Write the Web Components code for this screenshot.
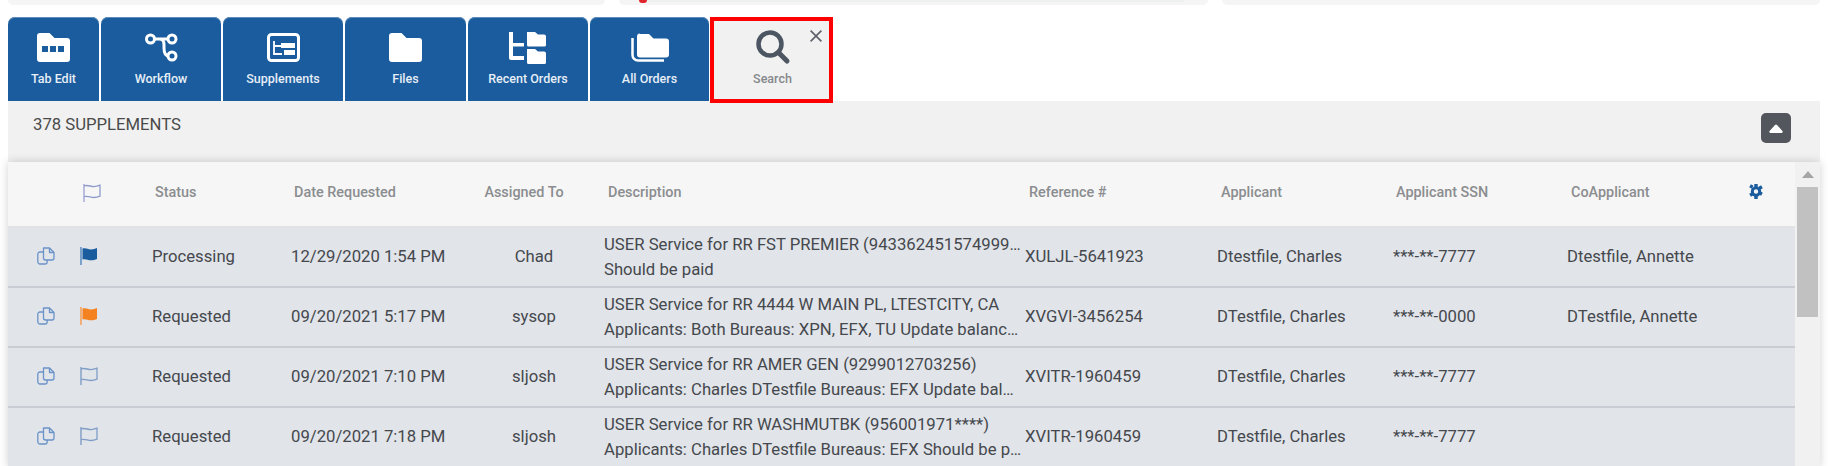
<!DOCTYPE html>
<html>
<head>
<meta charset="utf-8">
<title>Supplements</title>
<style>
  html, body { margin: 0; padding: 0; background: #fff; overflow: hidden; }
  body { font-family: "Roboto", "Liberation Sans", sans-serif; }
</style>
</head>
<body>
<order-page>
  <top-strip></top-strip>
  <tab-bar>
    <tab-item label="Tab Edit" w="91"><ui-icon name="folderdots"></ui-icon></tab-item>
    <tab-item label="Workflow" w="120"><ui-icon name="workflow"></ui-icon></tab-item>
    <tab-item label="Supplements" w="120"><ui-icon name="supplements"></ui-icon></tab-item>
    <tab-item label="Files" w="121"><ui-icon name="folder"></ui-icon></tab-item>
    <tab-item label="Recent Orders" w="120"><ui-icon name="recent"></ui-icon></tab-item>
    <tab-item label="All Orders" w="119"><ui-icon name="allorders"></ui-icon></tab-item>
    <search-tab></search-tab>
  </tab-bar>
  <supp-panel count="378 SUPPLEMENTS">
    <supp-table>
      <supp-row flag="flagblue">
        <span slot="status">Processing</span><span slot="date">12/29/2020 1:54 PM</span><span slot="who">Chad</span>
        <span slot="l1">USER Service for RR FST PREMIER (943362451574999…</span><span slot="l2">Should be paid</span>
        <span slot="ref">XULJL-5641923</span><span slot="app">Dtestfile, Charles</span><span slot="ssn">***-**-7777</span><span slot="co">Dtestfile, Annette</span>
      </supp-row>
      <supp-row flag="flagorange">
        <span slot="status">Requested</span><span slot="date">09/20/2021 5:17 PM</span><span slot="who">sysop</span>
        <span slot="l1">USER Service for RR 4444 W MAIN PL, LTESTCITY, CA</span><span slot="l2">Applicants: Both Bureaus: XPN, EFX, TU Update balanc…</span>
        <span slot="ref">XVGVI-3456254</span><span slot="app">DTestfile, Charles</span><span slot="ssn">***-**-0000</span><span slot="co">DTestfile, Annette</span>
      </supp-row>
      <supp-row flag="flagline">
        <span slot="status">Requested</span><span slot="date">09/20/2021 7:10 PM</span><span slot="who">sljosh</span>
        <span slot="l1">USER Service for RR AMER GEN (9299012703256)</span><span slot="l2">Applicants: Charles DTestfile Bureaus: EFX Update bal…</span>
        <span slot="ref">XVITR-1960459</span><span slot="app">DTestfile, Charles</span><span slot="ssn">***-**-7777</span>
      </supp-row>
      <supp-row flag="flagline">
        <span slot="status">Requested</span><span slot="date">09/20/2021 7:18 PM</span><span slot="who">sljosh</span>
        <span slot="l1">USER Service for RR WASHMUTBK (956001971****)</span><span slot="l2">Applicants: Charles DTestfile Bureaus: EFX Should be p…</span>
        <span slot="ref">XVITR-1960459</span><span slot="app">DTestfile, Charles</span><span slot="ssn">***-**-7777</span>
      </supp-row>
    </supp-table>
  </supp-panel>
</order-page>

<script>
// all the icons in one place, every one drawn at its real pixel size
const ICONS = {
  folderdots: [33, 29, `<path fill="#fff" d="M3 0h9.500l5 5H30a3 3 0 0 1 3 3v18a3 3 0 0 1-3 3H3a3 3 0 0 1-3-3V3a3 3 0 0 1 3-3z"/>
    <path fill="#1a5c9e" d="M5 13h6v6H5zM13 13h6v6h-6zM21 13h6v6h-6z"/>`],
  workflow: [33, 29, `<g fill="none" stroke="#fff" stroke-width="3"><path d="M9 6h14M14 6c4 0 5 2 5 6v3c0 5 2 8 5 8"/>
    <circle cx="5.500" cy="6" r="4"/><circle cx="27" cy="6" r="4"/><circle cx="27" cy="23" r="4"/></g>`],
  supplements: [33, 29, `<rect x="1.500" y="1.500" width="30" height="26" rx="3" fill="none" stroke="#fff" stroke-width="3"/>
    <path fill="none" stroke="#fff" stroke-width="1.800" d="M7 8v13h8M7 13h7"/><path fill="#fff" d="M14 10h14v5H14zM17 17h11v5H17z"/>`],
  folder: [33, 29, `<path fill="#fff" d="M3 0h9.500l5 5H30a3 3 0 0 1 3 3v18a3 3 0 0 1-3 3H3a3 3 0 0 1-3-3V3a3 3 0 0 1 3-3z"/>`],
  recent: [38, 33, `<path fill="#fff" d="M0 1h4v11h11v3.500H4V25h11v4H2a2 2 0 0 1-2-2z"/>
    <path fill="#fff" d="M18 1h8l3 2.500h6a2 2 0 0 1 2 2V14a1.500 1.500 0 0 1-1.500 1.500h-16A1.500 1.500 0 0 1 18 14zM18 18h8l3 2.500h6a2 2 0 0 1 2 2V31.500a1.500 1.500 0 0 1-1.500 1.500h-16a1.500 1.500 0 0 1-1.500-1.500z"/>`],
  allorders: [38, 29, `<path fill="#fff" d="M9 1h9l4.500 4.500H35a3 3 0 0 1 3 3v13a3 3 0 0 1-3 3H9a3 3 0 0 1-3-3v-18a3 3 0 0 1 3-3z"/>
    <path fill="none" stroke="#fff" stroke-width="2.500" d="M1.500 5v17a5.500 5.500 0 0 0 5.500 5.500h26"/>`],
  search: [34, 34, `<circle cx="14" cy="14" r="11.500" fill="none" stroke="#4c5662" stroke-width="4.500"/>
    <path d="M22.500 22.500L31 31" stroke="#4c5662" stroke-width="5" stroke-linecap="round"/>`],
  close: [12, 12, `<path d="M.6.6l10.800 10.800M11.400.6L.6 11.400" stroke="#5b6068" stroke-width="1.600" fill="none"/>`],
  copy: [18, 18, `<g fill="none" stroke="#6b93c8" stroke-width="1.300" stroke-linejoin="round"><path d="M6.500 1h6l4.500 4.500V11a2 2 0 0 1-2 2H8.500a2 2 0 0 1-2-2z"/><path d="M12.500 1v4.500H17"/><path d="M6.500 5H3a2.200 2.200 0 0 0-2.200 2.200v7.600A2.200 2.200 0 0 0 3 17h5a2.200 2.200 0 0 0 2.200-2.200V13"/></g>`],
  flagblue: [18, 18, `<path d="M1 0v18" stroke="#5f90c4" stroke-width="1.600"/><path fill="#1a5c9e" d="M2.500 1.500C6 .4 7.500 2.400 11 2.400c2.500 0 4-.6 6-1.400v11c-2 .8-3.500 1.300-6 1.300-3.500 0-5-1.800-8.500-.9z"/>`],
  flagorange: [18, 18, `<path d="M1 0v18" stroke="#f5a25c" stroke-width="1.600"/><path fill="#f58220" d="M2.500 1.500C6 .4 7.500 2.400 11 2.400c2.500 0 4-.6 6-1.400v11c-2 .8-3.500 1.300-6 1.300-3.500 0-5-1.800-8.500-.9z"/>`],
  flagline: [18, 18, `<path d="M1 0v18" stroke="#7f9dc6" stroke-width="1.400"/><path fill="none" stroke="#7f9dc6" stroke-width="1.300" d="M1 1.800C5 .6 7.500 2.600 11 2.600c2.500 0 4-.6 6-1.400v11c-2 .8-3.500 1.300-6 1.300-3.500 0-6-1.800-10-.9"/>`],
  flaghead: [18, 18, `<path d="M1 0v18" stroke="#a3a6d6" stroke-width="1.400"/><path fill="none" stroke="#8f9ccb" stroke-width="1.300" d="M1 1.800C5 .6 7.500 2.600 11 2.600c2.500 0 4-.6 6-1.400v11c-2 .8-3.500 1.300-6 1.300-3.500 0-6-1.800-10-.9"/>`],
  gear: [14, 15, `<circle cx="7" cy="7.500" r="3.700" fill="none" stroke="#1a5c9e" stroke-width="3"/>
    <path fill="#1a5c9e" d="M5.300 0h3.400v3H5.300zM5.300 12h3.400v3H5.300zM.2 3.200l1.700-2.900 2.600 1.500-1.700 2.900zM9.500 10.200l1.700-2.900 2.600 1.500-1.700 2.900zM1.900 12.700L.2 9.800l2.600-1.500 1.700 2.900zM11.200 5.700L9.500 2.800l2.600-1.500 1.700 2.900z"/>`],
  caretup: [14, 9, `<path fill="#fff" d="M6 1a1.300 1.300 0 0 1 2 0l5.400 6a1.200 1.200 0 0 1-1 2H1.600a1.200 1.200 0 0 1-1-2z"/>`],
  scrollup: [12, 7, `<path fill="#a6a6a6" d="M6 0l6 7H0z"/>`]
}

class UiIcon extends HTMLElement {
  connectedCallback() {
    const [w, h, body] = ICONS[this.getAttribute('name')]
    this.attachShadow({ mode: 'open' })
    this.shadowRoot.innerHTML = `
      <style>:host { display: block; line-height: 0; } svg { display: block; overflow: visible; }</style>
      <svg width="${w}" height="${h}" viewBox="0 0 ${w} ${h}">${body}</svg>`
  }
}
customElements.define('ui-icon', UiIcon)

class OrderPage extends HTMLElement {
  constructor() {
    super()
    this.attachShadow({ mode: 'open' })
    this.shadowRoot.innerHTML = `
      <style>
        :host { display: flex; flex-direction: column; height: 466px; overflow: hidden; padding: 0 12px 0 8px; }
      </style>
      <slot></slot>`
  }
}
customElements.define('order-page', OrderPage)

// the cut off cards above the tabs
class TopStrip extends HTMLElement {
  constructor() {
    super()
    this.attachShadow({ mode: 'open' })
    this.shadowRoot.innerHTML = `
      <style>
        :host { display: flex; gap: 14px; height: 5px; margin-bottom: 12px; flex: none; }
        .piece { background: #f5f5f5; border-radius: 0 0 5px 5px; }
        .a { width: 597px; }
        .b { width: 589px; display: flex; padding: 0 24px 0 20px; gap: 0; box-sizing: border-box; }
        .c { flex: 1; }
        .inner { flex: 1; height: 2px; background: #eef0f0; border-radius: 0 0 3px 3px; }
        .dot { width: 8px; height: 3px; background: #e0242c; border-radius: 0 0 4px 4px; }
      </style>
      <div class="piece a"></div>
      <div class="piece b"><div class="dot"></div><div class="inner"></div></div>
      <div class="piece c"></div>`
  }
}
customElements.define('top-strip', TopStrip)

class TabBar extends HTMLElement {
  constructor() {
    super()
    this.attachShadow({ mode: 'open' })
    this.shadowRoot.innerHTML = `
      <style>
        :host { display: flex; gap: 2px; height: 84px; flex: none; position: relative; z-index: 2; }
      </style>
      <slot></slot>`
  }
}
customElements.define('tab-bar', TabBar)

class TabItem extends HTMLElement {
  connectedCallback() {
    this.attachShadow({ mode: 'open' })
    this.shadowRoot.innerHTML = `
      <style>
        :host {
          display: flex; flex-direction: column; align-items: center; box-sizing: border-box;
          width: ${this.getAttribute('w')}px; height: 84px; padding-top: 14px;
          background: #1a5c9e; border-radius: 7px 7px 0 0;
          box-shadow: inset 0 1px 0 #5e8dbb;
          color: #e6eef6; font: 500 12.5px "Roboto", sans-serif;
        }
        .ic { height: 33px; display: flex; align-items: center; justify-content: center; }
        .lbl { margin-top: 7px; line-height: 15px; }
      </style>
      <div class="ic"><slot></slot></div>
      <div class="lbl">${this.getAttribute('label')}</div>`
  }
}
customElements.define('tab-item', TabItem)

class SearchTab extends HTMLElement {
  constructor() {
    super()
    this.attachShadow({ mode: 'open' })
    this.shadowRoot.innerHTML = `
      <style>
        :host {
          display: flex; flex-direction: column; align-items: center; box-sizing: border-box;
          position: relative; width: 123px; height: 86px; margin-left: -1px; padding: 9px 0 0 2px;
          background: #f1f1f1; border: 4px solid #f00;
          color: #85888c; font: 500 12.5px "Roboto", sans-serif;
        }
        .x { position: absolute; top: 9px; right: 7px; }
        .lbl { margin-top: 7px; line-height: 15px; }
      </style>
      <ui-icon name="search"></ui-icon>
      <div class="lbl">Search</div>
      <ui-icon class="x" name="close"></ui-icon>`
  }
}
customElements.define('search-tab', SearchTab)

class SuppPanel extends HTMLElement {
  connectedCallback() {
    this.attachShadow({ mode: 'open' })
    this.shadowRoot.innerHTML = `
      <style>
        :host { display: block; flex: 1; background: #f1f1f1; min-height: 0; }
        .head { display: flex; justify-content: space-between; height: 61px; box-sizing: border-box; padding: 13px 29px 0 25px; }
        .count { font: 400 16.700px/22px "Roboto", sans-serif; color: #4a4a4a; }
        .toggle {
          width: 30px; height: 30px; margin-top: -1px; border-radius: 5px; background: #54565d;
          display: flex; align-items: center; justify-content: center;
        }
      </style>
      <div class="head">
        <div class="count">${this.getAttribute('count')}</div>
        <div class="toggle"><ui-icon name="caretup"></ui-icon></div>
      </div>
      <slot></slot>`
  }
}
customElements.define('supp-panel', SuppPanel)

const COLS = '58px 78px 139px 175px 138px 429px 191px 176px 174px 1fr'

class SuppTable extends HTMLElement {
  constructor() {
    super()
    this.attachShadow({ mode: 'open' })
    this.shadowRoot.innerHTML = `
      <style>
        :host { display: flex; background: #f6f6f6; box-shadow: 0 0 9px rgba(0,0,0,.18); }
        .body { flex: 1; min-width: 0; }
        .hd {
          display: grid; grid-template-columns: ${COLS}; height: 66px; box-sizing: border-box;
          border-bottom: 2px solid #e0e2e6; padding-top: 22px;
          font: 500 14.400px/18px "Roboto", sans-serif; color: #8b8d90;
        }
        .hd div { padding-left: 11px; white-space: nowrap; }
        .hd .flag { padding: 0 0 0 17px; }
        .hd .who { padding: 0 6px 0 0; text-align: center; }
        .hd .ref { padding-left: 4px; }
        .hd .last { display: flex; justify-content: space-between; padding: 0 32px 0 5px; }
        .bar { width: 25px; flex: none; box-sizing: border-box; padding: 0 2px 0 2px; background: #f1f1f1; }
        .up { height: 25px; display: flex; align-items: center; justify-content: center; }
        .thumb { height: 130px; background: #c1c1c1; }
      </style>
      <div class="body">
        <div class="hd">
          <div></div>
          <div class="flag"><ui-icon name="flaghead"></ui-icon></div>
          <div>Status</div>
          <div>Date Requested</div>
          <div class="who">Assigned To</div>
          <div style="padding-left:12px">Description</div>
          <div class="ref">Reference #</div>
          <div style="padding-left:5px">Applicant</div>
          <div style="padding-left:4px">Applicant SSN</div>
          <div class="last"><span>CoApplicant</span><ui-icon name="gear"></ui-icon></div>
        </div>
        <slot></slot>
      </div>
      <div class="bar"><div class="up"><ui-icon name="scrollup"></ui-icon></div><div class="thumb"></div></div>`
  }
}
customElements.define('supp-table', SuppTable)

class SuppRow extends HTMLElement {
  connectedCallback() {
    this.attachShadow({ mode: 'open' })
    this.shadowRoot.innerHTML = `
      <style>
        :host {
          display: grid; grid-template-columns: ${COLS}; align-items: center; box-sizing: border-box;
          height: 60px; background: #e1e4e9; border-bottom: 2px solid #c9cdd3;
          font: 400 16.700px/25.300px "Roboto", sans-serif; color: #45484d;
        }
        .cell { padding-left: 8px; white-space: nowrap; }
        .copy { padding: 0 0 2px 29px; }
        .flag { padding: 0 0 2px 14px; }
        .who { padding: 0 0 0 14px; text-align: center; }
        .desc { min-width: 0; }
        .desc div { overflow: hidden; white-space: nowrap; }
        .tight { padding-left: 1px; }
        .ref { padding-left: 0; }
      </style>
      <div class="copy"><ui-icon name="copy"></ui-icon></div>
      <div class="flag"><ui-icon name="${this.getAttribute('flag')}"></ui-icon></div>
      <div class="cell"><slot name="status"></slot></div>
      <div class="cell"><slot name="date"></slot></div>
      <div class="cell who"><slot name="who"></slot></div>
      <div class="cell desc"><div><slot name="l1"></slot></div><div><slot name="l2"></slot></div></div>
      <div class="cell ref"><slot name="ref"></slot></div>
      <div class="cell tight"><slot name="app"></slot></div>
      <div class="cell tight"><slot name="ssn"></slot></div>
      <div class="cell tight"><slot name="co"></slot></div>`
  }
}
customElements.define('supp-row', SuppRow)
</script>
</body>
</html>
